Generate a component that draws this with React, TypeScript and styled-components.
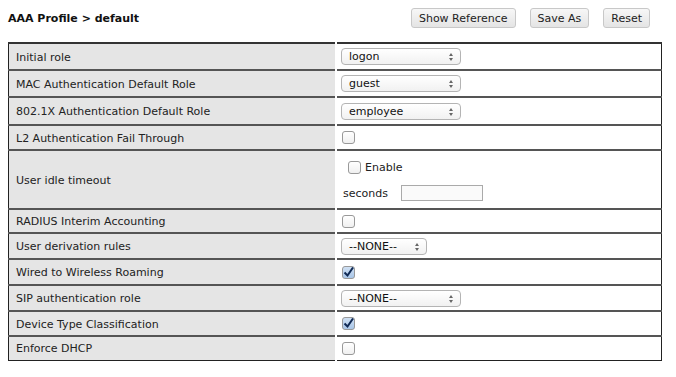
import styled, { createGlobalStyle } from 'styled-components';

const GlobalStyle = createGlobalStyle`
  body {
    margin: 0;
    background: #fff;
    font-family: 'DejaVu Sans', Verdana, sans-serif;
    font-size: 11px;
    color: #222;
  }
`;

const Page = styled.div`
  padding: 7px 14px 0 8px;
  width: 676px;
  box-sizing: border-box;
`;

const Header = styled.div`
  display: flex;
  align-items: center;
  height: 22px;
  margin-bottom: 13px;
`;

const Title = styled.h1`
  flex: 1;
  margin: 0;
  font-size: 11px;
  font-weight: bold;
  color: #111;
`;

const Actions = styled.div`
  display: flex;
  gap: 14px;
  margin-right: 12px;
`;

const Button = styled.button`
  font-family: 'DejaVu Sans', Verdana, sans-serif;
  font-size: 11px;
  color: #222;
  height: 20px;
  padding: 0 7px;
  border: 1px solid #c8c8c8;
  border-radius: 3px;
  background: linear-gradient(#f7f7f7, #e4e4e4);
`;

const Table = styled.table`
  width: 654px;
  border-collapse: collapse;
  border: 1px solid #222;
  border-top: 2px solid #333;
  tr + tr > td {
    border-top: 2px solid #555;
  }
`;

const Row = styled.tr<{ $h: number }>`
  height: ${({ $h }) => $h}px;
`;

const Label = styled.td`
  width: 319px;
  padding: 1px 0 0 7px;
  background: #e5e5e5;
  border-right: 2px solid #fff;
  vertical-align: middle;
`;

const Value = styled.td`
  padding: 0 0 0 4px;
  vertical-align: middle;
`;

const Select = styled.div<{ $w: number }>`
  position: relative;
  width: ${({ $w }) => $w}px;
  height: 17px;
  box-sizing: border-box;
  border: 1px solid #b4b4b4;
  border-radius: 4px;
  background: linear-gradient(#fff, #f1f1f1);
  padding-left: 7px;
  line-height: 15px;
  font-size: 11px;
  color: #111;
  &::after {
    content: '';
    position: absolute;
    right: 7px;
    top: 4px;
    border-left: 2px solid transparent;
    border-right: 2px solid transparent;
    border-bottom: 3px solid #666;
  }
  &::before {
    content: '';
    position: absolute;
    right: 7px;
    top: 9px;
    border-left: 2px solid transparent;
    border-right: 2px solid transparent;
    border-top: 3px solid #666;
  }
`;

const Check = styled.span<{ $on?: boolean }>`
  display: inline-flex;
  align-items: center;
  justify-content: center;
  width: 11px;
  height: 11px;
  margin-left: 1px;
  border: 1px solid #999;
  border-radius: 3px;
  background: ${({ $on }) => ($on ? 'linear-gradient(#cfe0f3, #a9c6e8)' : 'linear-gradient(#fff, #f0f0f0)')};
  vertical-align: middle;
`;

const Idle = styled.div`
  display: flex;
  flex-direction: column;
  gap: 11px;
  padding: 3px 0 0 2px;
`;

const Line = styled.label`
  display: flex;
  align-items: center;
  gap: 4px;
  margin-left: 4px;
`;

const SecondsLine = styled.div`
  display: flex;
  align-items: center;
  gap: 13px;
`;

const TextBox = styled.div`
  width: 82px;
  height: 16px;
  box-sizing: border-box;
  border: 1px solid #aaa;
  background: #fafafa;
`;

function CheckBox({ on }: { on?: boolean }) {
  return (
    <Check $on={on}>
      {on && (
        <svg width="11" height="11" viewBox="0 0 11 11">
          <path d="M1.5 5.5 L4.5 8.5 L10 0.5" fill="none" stroke="#102a55" strokeWidth="2" />
        </svg>
      )}
    </Check>
  );
}

type Item = { label: string; h: number; kind: 'select' | 'check' | 'idle'; value?: string; w?: number; on?: boolean };

const rows: Item[] = [
  { label: 'Initial role', h: 27, kind: 'select', value: 'logon', w: 120 },
  { label: 'MAC Authentication Default Role', h: 27, kind: 'select', value: 'guest', w: 120 },
  { label: '802.1X Authentication Default Role', h: 28, kind: 'select', value: 'employee', w: 120 },
  { label: 'L2 Authentication Fail Through', h: 25, kind: 'check' },
  { label: 'User idle timeout', h: 59, kind: 'idle' },
  { label: 'RADIUS Interim Accounting', h: 24, kind: 'check' },
  { label: 'User derivation rules', h: 26, kind: 'select', value: '--NONE--', w: 86 },
  { label: 'Wired to Wireless Roaming', h: 26, kind: 'check', on: true },
  { label: 'SIP authentication role', h: 26, kind: 'select', value: '--NONE--', w: 120 },
  { label: 'Device Type Classification', h: 25, kind: 'check', on: true },
  { label: 'Enforce DHCP', h: 24, kind: 'check' },
];

export default function App() {
  return (
    <Page>
      <GlobalStyle />
      <Header>
        <Title>AAA Profile &gt; default</Title>
        <Actions>
          <Button>Show Reference</Button>
          <Button>Save As</Button>
          <Button>Reset</Button>
        </Actions>
      </Header>
      <Table>
        <tbody>
          {rows.map((r) => (
            <Row key={r.label} $h={r.h}>
              <Label>{r.label}</Label>
              <Value>
                {r.kind === 'select' && <Select $w={r.w ?? 120}>{r.value}</Select>}
                {r.kind === 'check' && <CheckBox on={r.on} />}
                {r.kind === 'idle' && (
                  <Idle>
                    <Line>
                      <CheckBox />
                      Enable
                    </Line>
                    <SecondsLine>
                      seconds
                      <TextBox />
                    </SecondsLine>
                  </Idle>
                )}
              </Value>
            </Row>
          ))}
        </tbody>
      </Table>
    </Page>
  );
}
